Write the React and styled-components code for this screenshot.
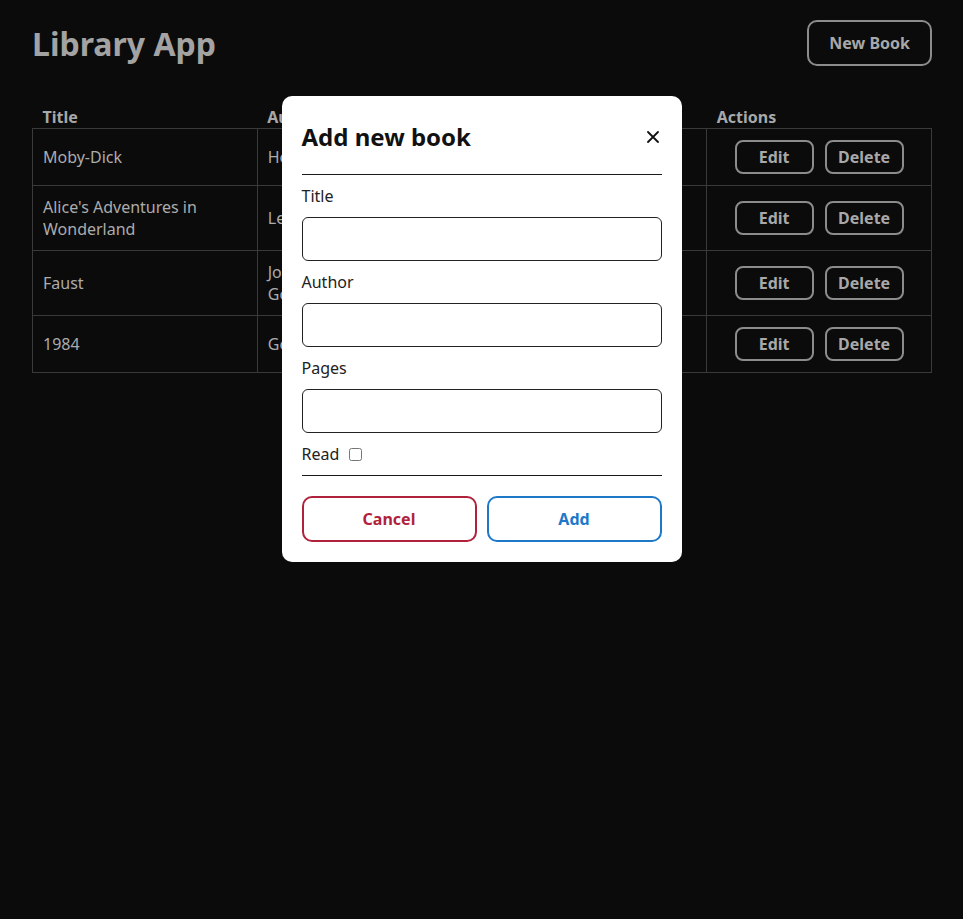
import React from 'react';
import styled, { createGlobalStyle } from 'styled-components';

const GlobalStyle = createGlobalStyle`
    * { box-sizing: border-box; }
    body {
        margin: 0;
        background: #0b0b0b;
        color: #a8a8a8;
        font-family: "Noto Sans", "Open Sans", sans-serif;
        font-size: 16px;
    }
`;

const Page = styled.div`
    padding: 20px 31px 20px 32px;
    min-height: 100vh;
`;

const Header = styled.header`
    display: flex;
    justify-content: space-between;
    align-items: center;
`;

const AppTitle = styled.h1`
    margin: 0;
    font-size: 32px;
    font-weight: 700;
    color: #a3a3a3;
`;

const OutlineButton = styled.button`
    font-family: inherit;
    font-size: 16px;
    font-weight: 700;
    color: #a8a8a8;
    background: transparent;
    border: 2px solid #8c8c8c;
    border-radius: ${props => props.small ? '8px' : '10px'};
    padding: ${props => props.small ? '0' : '10px 20px'};
    width: ${props => props.small ? '79px' : 'auto'};
    height: ${props => props.small ? '34px' : 'auto'};
    cursor: pointer;
`;

const Table = styled.table`
    width: 100%;
    margin-top: 40px;
    border-collapse: collapse;
    table-layout: fixed;
`;

const Th = styled.th`
    text-align: left;
    font-weight: 700;
    padding: 0 10px;
    color: #a8a8a8;
`;

const Td = styled.td`
    border: 1px solid #3a3a3a;
    padding: 10px;
    vertical-align: middle;
    color: #acacac;
`;

const ActionsCell = styled(Td)`
    padding: 11px 10px;
`;

const Actions = styled.div`
    display: flex;
    justify-content: center;
    gap: 11px;
`;

const Overlay = styled.div`
    position: fixed;
    inset: 0;
    display: flex;
    justify-content: center;
    align-items: flex-start;
    padding-top: 96px;
`;

const Dialog = styled.div`
    width: 400px;
    background: #fff;
    border-radius: 10px;
    padding: 20px;
    color: #1a1a1a;
`;

const DialogHeader = styled.div`
    display: flex;
    justify-content: space-between;
    align-items: center;
    padding: 4px 0 21px;
    border-bottom: 1px solid #1a1a1a;
`;

const DialogTitle = styled.h2`
    margin: 0;
    font-size: 24px;
    font-weight: 700;
    color: #111;
`;

const CloseButton = styled.button`
    display: flex;
    align-items: center;
    justify-content: center;
    width: 20px;
    height: 20px;
    padding: 0;
    margin-right: -1px;
    background: none;
    border: none;
    cursor: pointer;
`;

const Form = styled.div`
    display: flex;
    flex-direction: column;
    gap: 10px;
    padding: 10px 0;
    border-bottom: 1px solid #1a1a1a;
`;

const Label = styled.label`
    color: #222;
`;

const Input = styled.input`
    height: 44px;
    width: 100%;
    border: 1px solid #222;
    border-radius: 6px;
    font-family: inherit;
    font-size: 16px;
    padding: 0 10px;
`;

const CheckRow = styled.label`
    display: flex;
    align-items: center;
    gap: 10px;
    color: #222;

    input {
        margin: 0;
        width: 13px;
        height: 13px;
    }
`;

const Footer = styled.div`
    display: grid;
    grid-template-columns: 1fr 1fr;
    gap: 10px;
    padding-top: 20px;
`;

const DialogButton = styled.button`
    height: 46px;
    background: #fff;
    border: 2px solid ${props => props.color};
    color: ${props => props.color};
    border-radius: 10px;
    font-family: inherit;
    font-size: 16px;
    font-weight: 700;
    cursor: pointer;
`;

const books = [
    { title: 'Moby-Dick', author: 'Herman Melville', pages: 635, read: 'Yes' },
    { title: "Alice's Adventures in Wonderland", author: 'Lewis Carroll', pages: 200, read: 'No' },
    { title: 'Faust', author: 'Johann Wolfgang von Goethe', pages: 464, read: 'No' },
    { title: '1984', author: 'George Orwell', pages: 328, read: 'Yes' },
];

function App() {
    return (
        <>
            <GlobalStyle />
            <Page>
                <Header>
                    <AppTitle>Library App</AppTitle>
                    <OutlineButton>New Book</OutlineButton>
                </Header>
                <Table>
                    <colgroup>
                        <col style={{ width: '25%' }} />
                        <col style={{ width: '25%' }} />
                        <col style={{ width: '12.5%' }} />
                        <col style={{ width: '12.5%' }} />
                        <col style={{ width: '25%' }} />
                    </colgroup>
                    <thead>
                        <tr>
                            <Th>Title</Th>
                            <Th>Author</Th>
                            <Th>Pages</Th>
                            <Th>Read</Th>
                            <Th>Actions</Th>
                        </tr>
                    </thead>
                    <tbody>
                        {books.map(book => (
                            <tr key={book.title}>
                                <Td>{book.title}</Td>
                                <Td>{book.author}</Td>
                                <Td>{book.pages}</Td>
                                <Td>{book.read}</Td>
                                <ActionsCell>
                                    <Actions>
                                        <OutlineButton small>Edit</OutlineButton>
                                        <OutlineButton small>Delete</OutlineButton>
                                    </Actions>
                                </ActionsCell>
                            </tr>
                        ))}
                    </tbody>
                </Table>
            </Page>

            <Overlay>
                <Dialog>
                    <DialogHeader>
                        <DialogTitle>Add new book</DialogTitle>
                        <CloseButton aria-label="Close">
                            <svg width="12" height="12" viewBox="0 0 12 12">
                                <path d="M1 1 L11 11 M11 1 L1 11" stroke="#111" strokeWidth="1.8" strokeLinecap="round" />
                            </svg>
                        </CloseButton>
                    </DialogHeader>
                    <Form>
                        <Label htmlFor="title">Title</Label>
                        <Input id="title" />
                        <Label htmlFor="author">Author</Label>
                        <Input id="author" />
                        <Label htmlFor="pages">Pages</Label>
                        <Input id="pages" />
                        <CheckRow>
                            Read
                            <input type="checkbox" />
                        </CheckRow>
                    </Form>
                    <Footer>
                        <DialogButton color="#b0223c">Cancel</DialogButton>
                        <DialogButton color="#1e78c8">Add</DialogButton>
                    </Footer>
                </Dialog>
            </Overlay>
        </>
    );
}

export default App;
